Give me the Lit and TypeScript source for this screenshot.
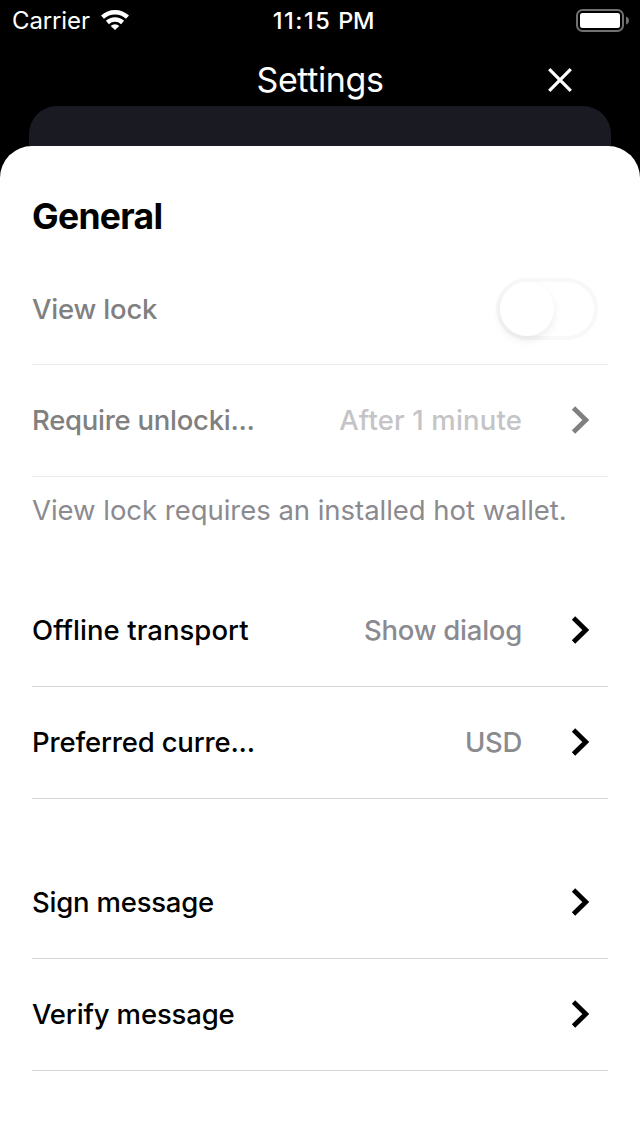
import { LitElement, html, css } from "lit";
import { customElement } from "lit/decorators.js";
import { styleMap } from "lit/directives/style-map.js";

interface Row {
  label: string;
  tracking: number;
  value?: string;
  valueTracking?: number;
  locked?: boolean;
  toggle?: boolean;
}

const lockRows: Row[] = [
  { label: "View lock", tracking: -0.2, toggle: true, locked: true },
  { label: "Require unlocki...", tracking: -0.27, value: "After 1 minute", valueTracking: 0.16, locked: true },
];
const prefRows: Row[] = [
  { label: "Offline transport", tracking: 0.06, value: "Show dialog", valueTracking: -0.25 },
  { label: "Preferred curre...", tracking: -0.17, value: "USD", valueTracking: -0.3 },
];
const messageRows: Row[] = [
  { label: "Sign message", tracking: -0.22 },
  { label: "Verify message", tracking: -0.15 },
];

@customElement("app-root")
export class AppRoot extends LitElement {
  static styles = css`
    :host { display: block; width: 640px; height: 1136px; overflow: hidden; background: #000; color: #000; font-family: Inter, sans-serif; }
    * { box-sizing: border-box; }
    svg { display: block; flex: none; }
    .status { height: 40px; display: grid; grid-template-columns: 1fr auto 1fr; align-items: center; padding: 0 10px 0 12px; color: #fff; font-size: 24px; line-height: 40px; }
    .carrier { display: flex; align-items: center; gap: 11px; }
    .carrier-name { letter-spacing: -0.12px; padding-top: 1px; }
    .wifi { margin-bottom: 2px; }
    .time { font-weight: 500; font-size: 23.5px; padding: 1px 0 0 5px; display: flex; gap: 7px; }
    .clock { letter-spacing: 1.5px; }
    .meridiem { letter-spacing: -0.3px; }
    .battery { justify-self: end; margin-top: 1px; }
    .header { height: 66px; display: grid; grid-template-columns: 100px 440px 100px; align-items: center; color: #fff; }
    .title { grid-column: 2; text-align: center; font-size: 34px; line-height: 40px; letter-spacing: -0.4px; padding-top: 13px; }
    .close { margin-left: 8px; margin-top: 14px; }
    .behind { height: 40px; margin: 0 29px; background: #1a1b22; border-radius: 28px 28px 0 0; }
    .sheet { height: 990px; background: #fff; border-radius: 32px 32px 0 0; padding: 48px 32px 0; }
    .heading { margin: 0; padding-top: 1px; font-size: 35.5px; line-height: 44px; font-weight: 700; height: 59px; letter-spacing: -0.7px; }
    .row { height: 112px; border-bottom: 1px solid #d4d4d5; padding-bottom: 1px; display: flex; align-items: center; font-size: 27.5px; line-height: 34px; font-weight: 500; white-space: nowrap; }
    .with-toggle { padding: 1px 0 0; }
    .label { flex: 1; }
    .value { color: #8a8a8f; margin-right: 49px; }
    .chevron { margin-right: 18px; }
    .locked { border-color: #e9e9e9; }
    .locked .label { color: #808080; }
    .locked .value { color: #c4c4c6; }
    .locked .chevron { color: #808080; }
    .note { margin: 0; font-size: 27.5px; line-height: 40px; letter-spacing: -0.03px; padding-top: 13px; height: 98px; color: #8a8a8f; white-space: nowrap; }
    .gap { height: 48px; }
    .toggle { width: 102px; height: 62px; margin-right: 10px; border: 4px solid #f8f8f8; border-radius: 31px; }
    .knob { width: 54px; height: 54px; border-radius: 50%; background: #fff; box-shadow: 0 4px 10px rgba(0,0,0,.08); }
  `;

  private track(px = 0) {
    return styleMap({ letterSpacing: `${px}px` });
  }

  private row(r: Row) {
    return html`<div class="row ${r.locked ? "locked" : ""} ${r.toggle ? "with-toggle" : ""}">
      <span class="label" style=${this.track(r.tracking)}>${r.label}</span>
      ${r.value ? html`<span class="value" style=${this.track(r.valueTracking)}>${r.value}</span>` : ""}
      ${r.toggle
        ? html`<div class="toggle"><div class="knob"></div></div>`
        : html`<svg class="chevron" width="19" height="28" viewBox="0 0 19 28" fill="none" stroke="currentColor" stroke-width="4.8"><path d="M2.5 2 L14.8 14 L2.5 26" /></svg>`}
    </div>`;
  }

  render() {
    return html`
      <div class="status">
        <div class="carrier"><span class="carrier-name">Carrier</span>
          <svg class="wifi" width="28" height="20" viewBox="0 0 28 20" fill="none" stroke="#fff" stroke-width="4.4"><path d="M1.5 7.2 A18.2 18.2 0 0 1 26.5 7.2M6.4 12.5 A11.3 11.3 0 0 1 21.6 12.5" /><path fill="#fff" stroke="none" d="M9.7 15.9 A6.2 6.2 0 0 1 18.3 15.9 L14 20Z" /></svg>
        </div>
        <div class="time"><span class="clock">11:15</span> <span class="meridiem">PM</span></div>
        <svg class="battery" width="54" height="24" viewBox="0 0 54 24"><rect x="1" y="1" width="46" height="21" rx="5.5" fill="none" stroke="#707070" stroke-width="2" /><rect x="4" y="4" width="40" height="15" rx="2.5" fill="#fff" /><path d="M50 7.5q3 1 3 4t-3 4z" fill="#707070" /></svg>
      </div>
      <div class="header">
        <span class="title">Settings</span>
        <svg class="close" width="24" height="24" viewBox="0 0 24 24" stroke="#fff" stroke-width="3.2"><path d="M1.2 1.2L22.8 22.8M22.8 1.2L1.2 22.8" /></svg>
      </div>
      <div class="behind"></div>
      <div class="sheet">
        <h1 class="heading">General</h1>
        ${lockRows.map((r) => this.row(r))}
        <p class="note">View lock requires an installed hot wallet.</p>
        ${prefRows.map((r) => this.row(r))}
        <div class="gap"></div>
        ${messageRows.map((r) => this.row(r))}
      </div>`;
  }
}
